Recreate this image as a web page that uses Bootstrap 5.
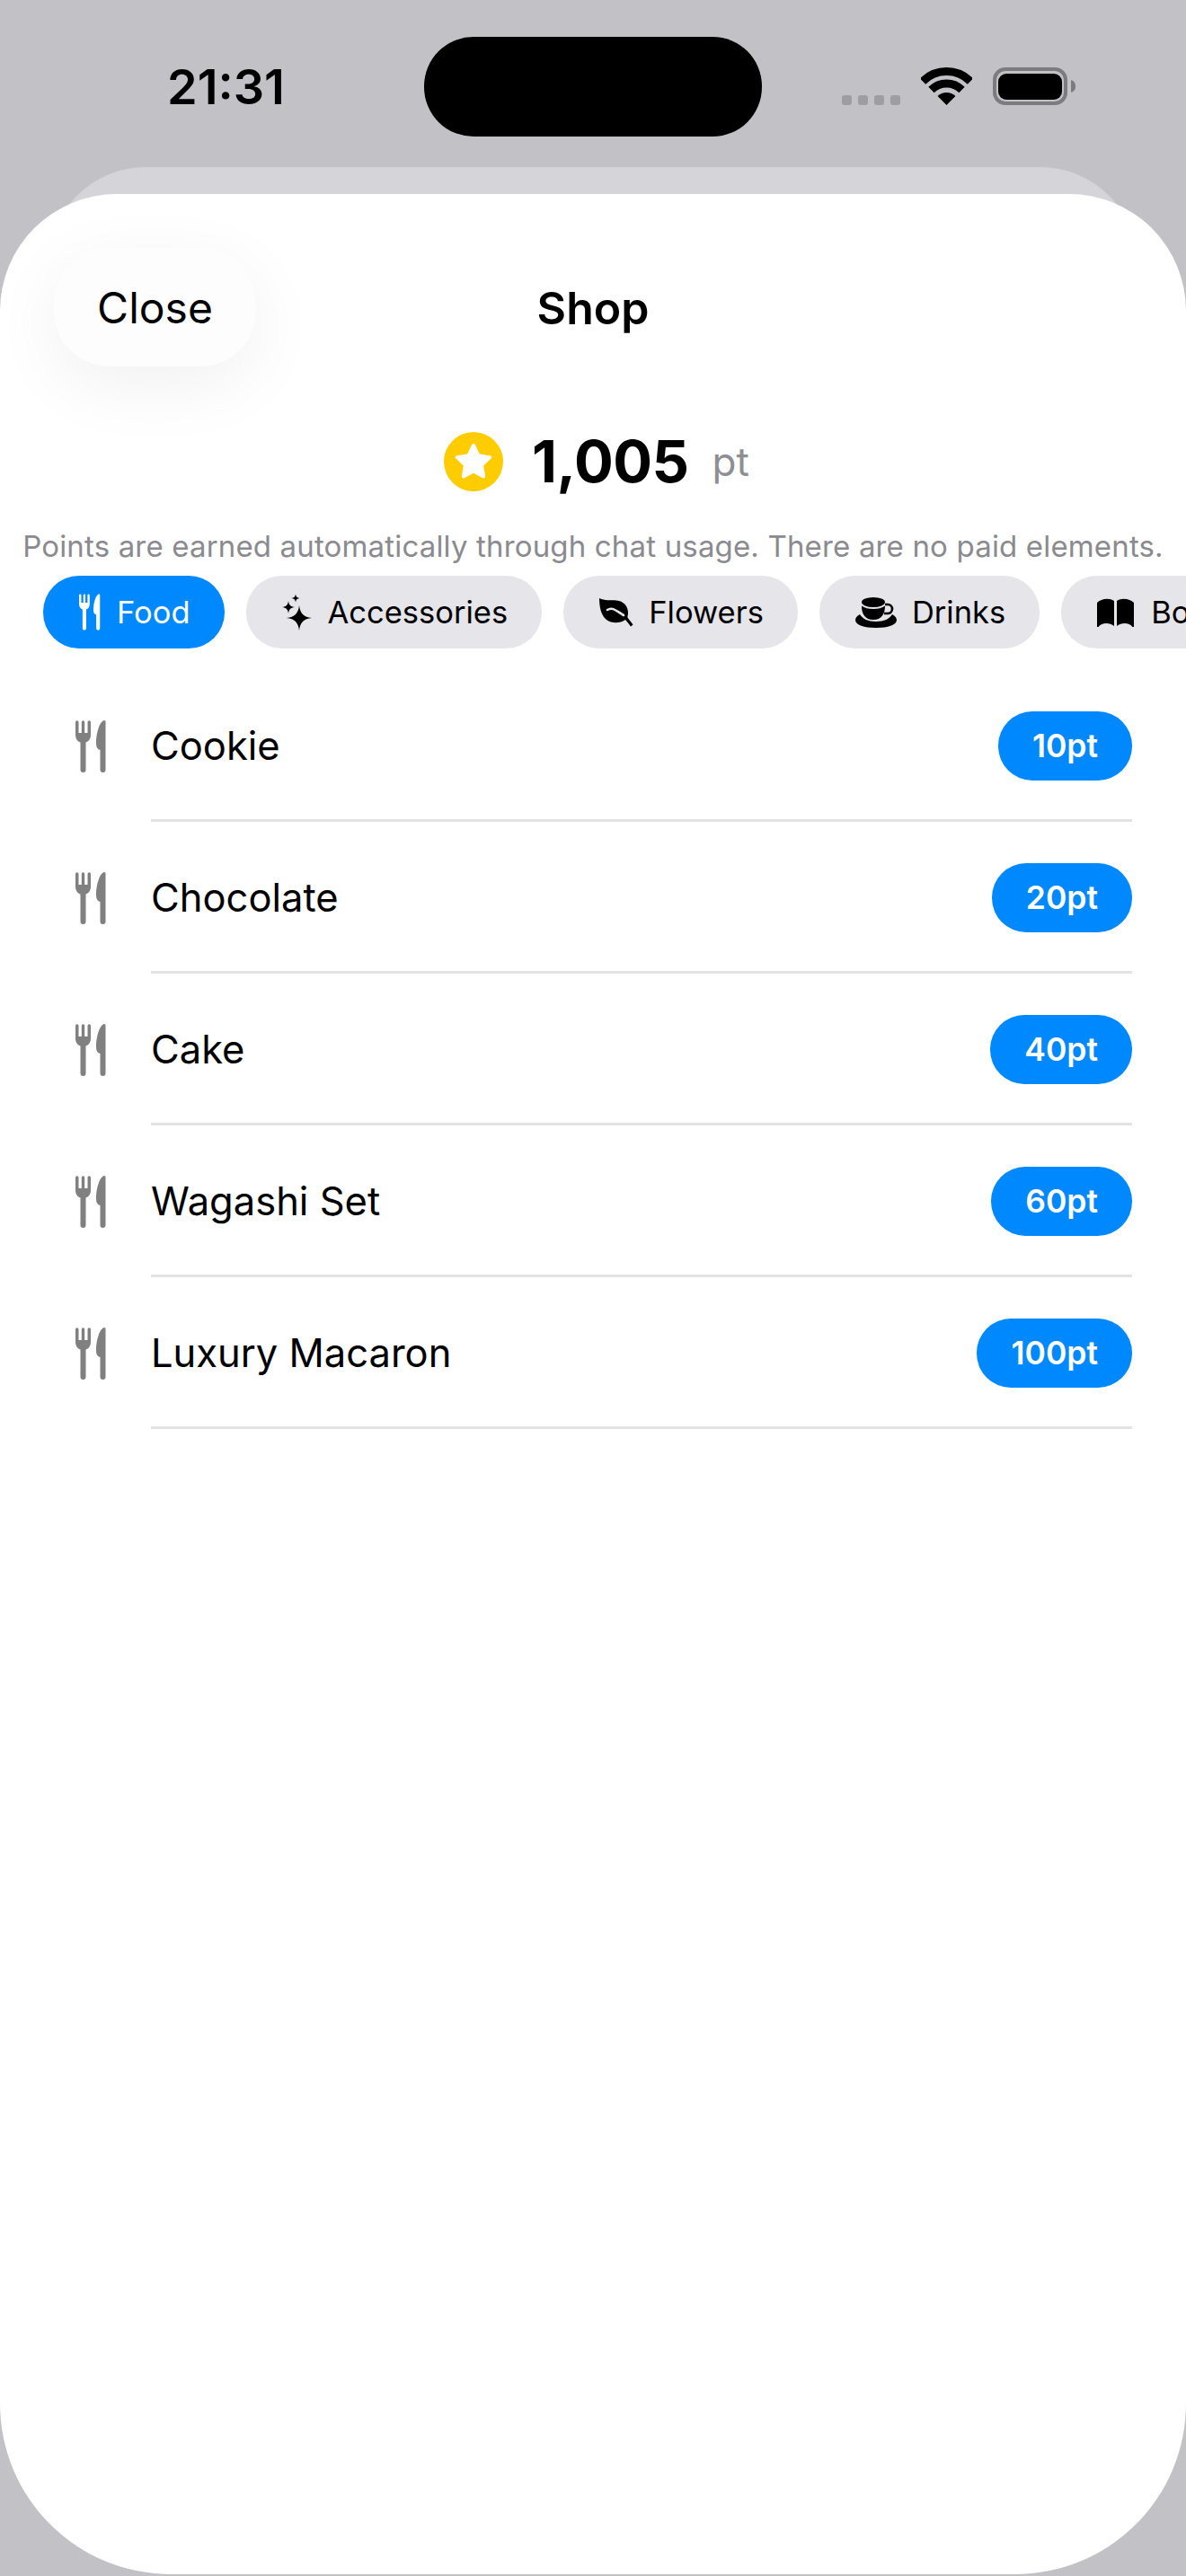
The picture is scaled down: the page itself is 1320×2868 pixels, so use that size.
<!doctype html>
<html lang="en">
<head>
<meta charset="utf-8">
<title>Shop</title>
<link href="https://cdn.jsdelivr.net/npm/bootstrap@5.3.0/dist/css/bootstrap.min.css" rel="stylesheet">
<style>
  html, body { margin: 0; height: 2868px; overflow: hidden; background: #c2c1c6; font-family: Inter, "Liberation Sans", sans-serif; color: #000; }
  .phone { width: 1320px; height: 2868px; overflow: hidden; }

  /* status bar */
  .status-bar { display: grid; grid-template-columns: 472px 376px 1fr; align-items: start; height: 186px; }
  .clock { padding: 68px 0 0 186px; font-size: 54px; line-height: 58px; font-weight: 600; }
  .island { margin-top: 41px; height: 111px; background: #000; border-radius: 55px; }
  .status-icons { margin-top: 75px; padding-left: 89px; height: 42px; }
  .signal-dot { width: 11px; height: 11px; border-radius: 3px; background: #9e9ea2; }

  /* stacked sheets */
  .sheet-behind { height: 140px; margin: 0 53px -110px; background: #d4d4d9; border-radius: 110px 110px 0 0; }
  .sheet { position: relative; height: 2650px; background: #fff; border-radius: 130px 130px 190px 190px; overflow: hidden; }

  .sheet-head { display: grid; grid-template-columns: 1fr auto 1fr; align-items: center; padding: 60px 60px 0; }
  .close-btn { width: 225px; height: 132px; padding: 2px 0 0; border: 0; border-radius: 62px; background: #fdfdfd; color: #000; font-size: 48px; line-height: 1; box-shadow: 0 20px 80px rgba(0, 0, 0, .06); }
  .sheet-title { font-size: 50px; line-height: 60px; font-weight: 600; margin: 2px 0 0; }

  .balance { margin-top: 73px; height: 66px; gap: 32px; padding-left: 8px; }
  .balance-num { font-size: 65px; line-height: 66px; font-weight: 700; letter-spacing: -.5px; }
  .balance-unit { font-size: 44px; line-height: 66px; color: #8e8e93; margin-left: 26px; }
  .note { margin: 41px 0 0; height: 40px; line-height: 40px; font-size: 33px; color: #8a8a8f; letter-spacing: .16px; white-space: nowrap; text-align: center; }

  .chip-row { display: flex; gap: 24px; margin-top: 13px; padding-left: 48px; height: 81px; }
  .chip { flex: none; display: flex; align-items: center; gap: 17px; height: 81px; padding: 0 38px 0 40px; border-radius: 40px; background: #e5e5ea; color: #000; font-size: 34.500px; }
  .chip.is-on { background: #0088ff; color: #fff; }
  .chip svg { flex: none; fill: currentColor; display: block; }

  .goods { margin-top: 24px; }
  .goods-row { display: flex; align-items: center; height: 169px; padding: 0 0 0 84px; background: none; border: 0; color: #000; }
  .goods-row > svg { flex: none; fill: #808080; display: block; }
  .goods-body { flex: 1; height: 169px; margin: 0 60px 0 48px; padding-top: 3px; border-bottom: 3px solid #e3e3e6; display: flex; align-items: center; justify-content: space-between; }
  .goods-name { font-size: 43.500px; line-height: 1; padding-top: 1px; }
  .price { display: inline-flex; align-items: center; justify-content: center; height: 77px; padding: 0 38px; border: 0; border-radius: 38px; background: #0088ff; color: #fff; font-size: 35.500px; font-weight: 560; }
  .price:hover { background: #0088ff; color: #fff; }
</style>
</head>
<body>
<svg width="0" height="0" class="d-block" aria-hidden="true">
  <symbol id="cutlery" viewBox="0 0 36 58">
    <path d="M0 2a1.7 1.7 0 0 1 3.5 0v12h3.3V2a1.7 1.7 0 0 1 3.4 0v12h3.3V2a1.7 1.7 0 0 1 3.5 0v14c0 5-2.500 7.500-5.500 8.500V55a3 3 0 0 1-6 0V24.500C2.500 23.500 0 21 0 16z"/>
    <path d="M32 0c1 0 1.500.8 1.500 2v53a3 3 0 0 1-6 0V33c-3-.8-4.500-3-4.500-7C23 14 27 1 32 0z"/>
  </symbol>
</svg>

<div class="phone">
  <header class="status-bar">
    <div class="clock">21:31</div>
    <div class="island"></div>
    <div class="status-icons d-flex align-items-end" style="gap:23px">
      <div class="d-flex" style="gap:7px">
        <span class="signal-dot"></span><span class="signal-dot"></span><span class="signal-dot"></span><span class="signal-dot"></span>
      </div>
      <svg width="57" height="42" viewBox="0 0 57 42" class="d-block">
        <path d="M2 15.500A37.500 37.500 0 0 1 55 15.500M11.500 25A24 24 0 0 1 45.500 25" fill="none" stroke="#000" stroke-width="9"/>
        <path d="M28.500 42L18.600 32A14 14 0 0 1 38.400 32z"/>
      </svg>
      <svg width="92" height="42" viewBox="0 0 92 42" class="d-block">
        <rect x="2" y="2" width="79" height="38" rx="12" fill="none" stroke="#7c7c80" stroke-width="4"/>
        <rect x="6" y="7" width="71" height="29" rx="9"/>
        <path d="M87 14c3 1 5 3 5 7s-2 6-5 7z" fill="#7c7c80"/>
      </svg>
    </div>
  </header>

  <div class="sheet-behind"></div>

  <main class="sheet">
    <div class="sheet-head">
      <div><button type="button" class="btn close-btn">Close</button></div>
      <h1 class="sheet-title">Shop</h1>
      <div></div>
    </div>

    <div class="balance d-flex justify-content-center align-items-center">
      <svg width="66" height="66" viewBox="0 0 66 66" class="d-block flex-none">
        <circle cx="33" cy="33" r="33" fill="#ffcc00"/>
        <path d="M33 15L38.600 26.300 51.070 28.130 42.030 36.940 44.170 49.370 33 43.500 21.830 49.370 23.970 36.940 14.930 28.130 27.400 26.300z" fill="#fff" stroke="#fff" stroke-width="4" stroke-linejoin="round"/>
      </svg>
      <div class="d-flex align-items-center">
        <span class="balance-num">1,005</span><span class="balance-unit">pt</span>
      </div>
    </div>

    <p class="note">Points are earned automatically through chat usage. There are no paid elements.</p>

    <nav class="chip-row">
      <a class="chip is-on text-decoration-none">
        <svg width="25" height="41"><use href="#cutlery"/></svg>Food
      </a>
      <a class="chip text-decoration-none">
        <svg width="34" height="42" viewBox="0 0 34 42">
          <path d="M19 13C20 22 24 26 33 27 24 28 20 32 19 41 18 32 14 28 5 27 14 26 18 22 19 13z"/>
          <path d="M7 8C7.500 12.500 9.500 14.500 14 15 9.500 15.500 7.500 17.500 7 22 6.500 17.500 4.500 15.500 0 15 4.500 14.500 6.500 12.500 7 8z"/>
          <path d="M15 .5C15.300 3.300 16.700 4.700 19.500 5 16.700 5.300 15.300 6.700 15 9.500 14.700 6.700 13.300 5.300 10.500 5 13.300 4.700 14.700 3.300 15 .5z"/>
        </svg>Accessories
      </a>
      <a class="chip text-decoration-none">
        <svg width="38" height="32" viewBox="0 0 38 32">
          <path d="M0 0C6 3 12 2 19 2.500 27 3 32 9 32 16 32 18 31.800 19.500 31.300 21 33 24 35.500 26.500 37.500 29.500L35 31.500C33 28.500 31 26 29 24 24 27.500 18 28 13 26.500 4 24 0 14 0 0z"/>
          <path d="M9 13C15 9 20 15 27 19" fill="none" stroke="#e5e5ea" stroke-width="2.600" stroke-linecap="round"/>
        </svg>Flowers
      </a>
      <a class="chip text-decoration-none">
        <svg width="46" height="34" viewBox="0 0 46 34">
          <path d="M5 19C1.500 21 0 23 0 25.500 0 30.500 10 34 23 34S46 30.500 46 25.500C46 23 44.500 21 41 19 38 24 32 27 23 27S8 24 5 19z"/>
          <path d="M7 9.500C7 19 11 25 20 25S33 19 33 9.500C30 12 25 13 20 13S10 12 7 9.500z"/>
          <ellipse cx="20" cy="5.500" rx="13" ry="5.500"/>
          <path d="M33 8h3a5 5 0 0 1 0 10h-4" fill="none" stroke="#000" stroke-width="2.600"/>
        </svg>Drinks
      </a>
      <a class="chip text-decoration-none" style="gap:19px">
        <svg width="41" height="32" viewBox="0 0 41 32">
          <path d="M0 5C4 1 13-1 19 3V31C14 27 5 27 1.500 32H0z"/>
          <path d="M41 5C37 1 28-1 22 3V31C27 27 36 27 39.500 32H41z"/>
        </svg>Books
      </a>
    </nav>

    <ul class="goods list-group list-group-flush">
      <li class="goods-row list-group-item">
        <svg width="36" height="58"><use href="#cutlery"/></svg>
        <div class="goods-body"><span class="goods-name">Cookie</span><button type="button" class="btn price">10pt</button></div>
      </li>
      <li class="goods-row list-group-item">
        <svg width="36" height="58"><use href="#cutlery"/></svg>
        <div class="goods-body"><span class="goods-name">Chocolate</span><button type="button" class="btn price">20pt</button></div>
      </li>
      <li class="goods-row list-group-item">
        <svg width="36" height="58"><use href="#cutlery"/></svg>
        <div class="goods-body"><span class="goods-name">Cake</span><button type="button" class="btn price">40pt</button></div>
      </li>
      <li class="goods-row list-group-item">
        <svg width="36" height="58"><use href="#cutlery"/></svg>
        <div class="goods-body"><span class="goods-name">Wagashi Set</span><button type="button" class="btn price">60pt</button></div>
      </li>
      <li class="goods-row list-group-item">
        <svg width="36" height="58"><use href="#cutlery"/></svg>
        <div class="goods-body"><span class="goods-name">Luxury Macaron</span><button type="button" class="btn price">100pt</button></div>
      </li>
    </ul>
  </main>
</div>
<script src="https://cdn.jsdelivr.net/npm/bootstrap@5.3.0/dist/js/bootstrap.bundle.min.js"></script>
</body>
</html>
